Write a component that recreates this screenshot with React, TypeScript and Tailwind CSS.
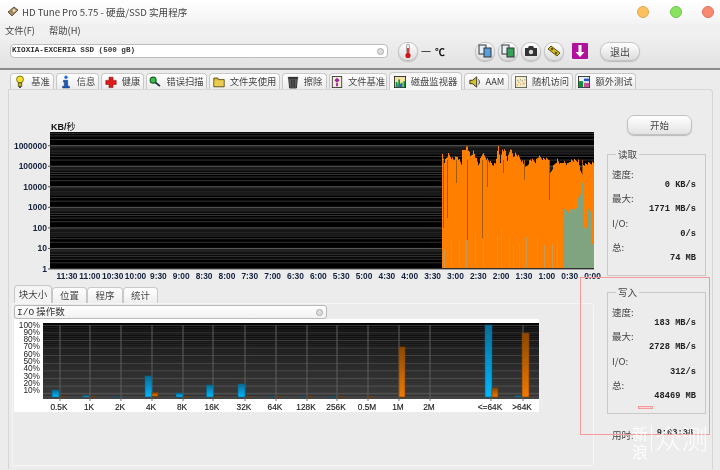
const cjk = "font-['Noto_Sans_CJK_SC','Noto_Sans',sans-serif]";
const arial = "'Liberation Sans', Arial, sans-serif";

const Bulb = () => (
  <svg width="14" height="16" viewBox="0 0 14 16">
    <circle cx="7" cy="5" r="4" fill="#f2e02a" stroke="#6d6a10" />
    <rect x="5" y="9" width="4" height="4" fill="#c9b820" stroke="#55520e" />
    <rect x="6" y="13" width="2" height="2" fill="#333" />
  </svg>
);
const Info = () => (
  <svg width="14" height="16" viewBox="0 0 14 16">
    <circle cx="7" cy="2.5" r="2" fill="#2472d8" />
    <path d="M4 6h5v7h2v2H3v-2h2V8H4z" fill="#1b5cc0" stroke="#123" strokeWidth="0.5" />
  </svg>
);
const Cross = () => (
  <svg width="15" height="16" viewBox="0 0 15 16">
    <path d="M5 2h5v4h4v5h-4v4H5v-4H1V6h4z" fill="#e01a1a" stroke="#7a0d0d" strokeWidth="0.7" />
  </svg>
);
const Lens = () => (
  <svg width="16" height="16" viewBox="0 0 16 16">
    <circle cx="5.5" cy="5.5" r="4" fill="#35c24a" stroke="#1c5a26" strokeWidth="1.4" />
    <path d="M8.5 8.5l6 5" stroke="#1d2a55" strokeWidth="2.6" />
  </svg>
);
const Folder = () => (
  <svg width="15" height="16" viewBox="0 0 15 16">
    <path d="M1 3h5l1 2h7v9H1z" fill="#d8b630" stroke="#4c3f0c" />
    <rect x="2" y="6" width="11" height="7" fill="#e9cd52" />
  </svg>
);
const Trash = () => (
  <svg width="14" height="16" viewBox="0 0 14 16">
    <rect x="1" y="2" width="12" height="2" fill="#333" />
    <path d="M2 4h10l-1 11H3z" fill="#6a6a6a" stroke="#222" />
    <path d="M5 5v9M7 5v9M9 5v9" stroke="#222" />
  </svg>
);
const DocQ = () => (
  <svg width="14" height="16" viewBox="0 0 14 16">
    <rect x="1.5" y="1.5" width="11" height="13" fill="#f1ecd8" stroke="#333" />
    <path d="M7 3l3 3-3 3-3-3z" fill="#a5209a" />
    <rect x="6" y="9" width="2" height="4" fill="#a5209a" />
  </svg>
);
const Monitor = () => (
  <svg width="14" height="14" viewBox="0 0 14 14">
    <rect x="0.5" y="0.5" width="13" height="13" fill="#f0e6a0" stroke="#222" />
    <path d="M2 13V7h2v6zM5 13V4h2v9zM8 13V8h2v5zM11 13V6h2v7z" fill="#0f8f3c" />
    <path d="M4 13v-3h1v3zM7 13v-4h1v4z" fill="#1a46c8" />
  </svg>
);
const Speaker = () => (
  <svg width="14" height="16" viewBox="0 0 14 16">
    <path d="M1 6h3l5-4v12l-5-4H1z" fill="#d5c22a" stroke="#222" />
    <path d="M11 5c1.5 2 1.5 4 0 6" stroke="#222" fill="none" />
  </svg>
);
const Random = () => (
  <svg width="14" height="14" viewBox="0 0 14 14">
    <rect x="0.5" y="0.5" width="13" height="13" fill="#f5edc0" stroke="#555" />
    <path d="M2 10h1v1H2zM4 7h1v1H4zM6 9h1v1H6zM8 5h1v1H8zM10 8h1v1h-1z" fill="#d8502a" />
    <path d="M3 5h1v1H3zM6 4h1v1H6zM9 9h1v1H9zM11 4h1v1h-1z" fill="#3a66c8" />
  </svg>
);
const Extra = () => (
  <svg width="14" height="14" viewBox="0 0 14 14">
    <rect x="0.5" y="0.5" width="13" height="13" fill="#e9f0f5" stroke="#222" />
    <path d="M1 6h5v7H1z" fill="#0f8f3c" />
    <path d="M7 3h6v3H7z" fill="#2a55c0" />
    <path d="M7 8h6v5H7z" fill="#c8509a" />
  </svg>
);

const tabs = [
  { label: "基准", width: "w-[44px]", icon: <Bulb /> },
  { label: "信息", width: "w-[43px]", icon: <Info /> },
  { label: "健康", width: "w-[43px]", icon: <Cross /> },
  { label: "错误扫描", width: "w-[61px]", icon: <Lens /> },
  { label: "文件夹使用", width: "w-[71px]", icon: <Folder /> },
  { label: "擦除", width: "w-[45px]", icon: <Trash /> },
  { label: "文件基准", width: "w-[58px]", icon: <DocQ /> },
  { label: "磁盘监视器", width: "w-[73px]", icon: <Monitor />, active: true },
  { label: "AAM", width: "w-[45px]", icon: <Speaker /> },
  { label: "随机访问", width: "w-[62px]", icon: <Random /> },
  { label: "额外测试", width: "w-[61px]", icon: <Extra /> },
];

function ToolButton({ children, className = "w-5" }: { children: React.ReactNode; className?: string }) {
  return (
    <div className={`${className} flex h-[19px] items-center justify-center rounded-[9px] border border-[#c4c4c4] bg-gradient-to-b from-white to-[#dcdcdc] shadow-[0_1px_1px_#bbb]`}>
      {children}
    </div>
  );
}

function Stats({ title, rows, className }: { title: string; rows: [string, string][]; className: string }) {
  return (
    <fieldset className={`${className} w-[99px] border border-[#c9c9c9] px-[4px]`}>
      <legend className={`${cjk} ml-[4px] px-[2px] text-[9.5px] leading-[12px] text-[#444]`}>{title}</legend>
      <div className="flex flex-col pt-[8px]">
        {rows.map(([label, value]) => (
          <div key={label} className="h-[24.4px]">
            <div className={`${cjk} h-[12px] text-[9.5px] leading-[12px] text-[#444]`}>{label}</div>
            <div className="pr-[5px] text-right font-['Liberation_Mono',monospace] text-[8.7px] leading-[10px] font-bold text-[#222]">
              {value}
            </div>
          </div>
        ))}
      </div>
    </fieldset>
  );
}

// outline of the orange area, in chart pixels
const orangeTop = [
  [442, 153], [444, 160], [448, 153], [453, 158], [457, 155], [461, 162], [462, 150], [467, 145], [470, 155],
  [473, 150], [478, 163], [482, 152], [487, 158], [492, 163], [495, 162], [498, 145], [500, 160], [502, 148],
  [505, 150], [507, 158], [510, 147], [513, 155], [515, 152], [518, 155], [522, 160], [525, 167], [530, 158],
  [535, 160], [538, 155], [542, 157], [548, 158], [550, 172], [553, 165], [557, 158], [560, 163], [563, 160],
  [567, 163], [570, 159], [578, 159], [581, 173], [583, 163], [588, 162], [594, 161],
];
const greenTop = [
  [563, 213], [565, 202], [568, 210], [571, 198], [573, 213], [577, 200], [579, 193], [582, 180], [585, 240],
  [587, 210], [590, 207], [592, 243], [593, 268],
];
const darkSpikes = [
  [443, 228], [447, 218], [456, 183], [467, 240], [482, 238], [487, 187], [503, 173], [524, 180], [549, 200], [582, 175],
];
const paleSpikes = [
  [444, 250], [451, 240], [459, 240], [466, 240], [475, 232], [483, 240], [497, 235], [501, 228], [509, 237],
  [513, 245], [519, 243], [526, 237], [537, 237], [544, 245], [552, 245], [557, 240],
];

// turns a hand-traced outline into 1px steps with a little noise, the graph is spiky
function jagged(points: number[][], amount: number) {
  const out: string[] = [];
  for (let i = 0; i < points.length - 1; i++) {
    const [x0, y0] = points[i];
    const [x1, y1] = points[i + 1];
    for (let x = x0; x < x1; x++) {
      const y = y0 + ((y1 - y0) * (x - x0)) / (x1 - x0) + ((x * 37) % 7) * amount;
      out.push(`${x},${y}`, `${x + 1},${y}`);
    }
  }
  return out.join(" ");
}

const timeLabels = [
  "11:30", "11:00", "10:30", "10:00", "9:30", "9:00", "8:30", "8:00", "7:30", "7:00", "6:30", "6:00",
  "5:30", "5:00", "4:30", "4:00", "3:30", "3:00", "2:30", "2:00", "1:30", "1:00", "0:30", "0:00",
];
const decades = ["1", "10", "100", "1000", "10000", "100000", "1000000"];

function MainChart() {
  const grid: { y: number; major: boolean; k: number }[] = [];
  for (let d = 0; d < 7; d++) {
    for (let k = 1; k < 10; k++) {
      const y = 269 - (d + Math.log10(k)) * 20.55;
      if (y > 132) grid.push({ y, major: k === 1, k });
    }
  }
  return (
    <svg width="604" height="168" viewBox="0 120 604 168" className="block">
      <text x="51" y="130" fontSize="9" fontWeight="bold" fill="#111" fontFamily={arial}>
        KB/
        <tspan fontFamily="'Noto Sans CJK SC'" fontWeight="normal">秒</tspan>
      </text>
      <rect x="50" y="132" width="544" height="137" fill="#000" />
      {grid.map((g, i) => (
        <rect key={i} x="50" y={g.y - 0.5} width="544" height="1" fill={g.major ? "#5c5c5c" : g.k > 5 ? "#262626" : "#343434"} />
      ))}
      <polygon points={`442,268 ${jagged(orangeTop, 0.5)} 594,268`} fill="#ff8000" />
      {darkSpikes.map(([x, y]) => (
        <rect key={x} x={x} y="160" width="1" height={y - 160} fill="#a55a08" />
      ))}
      {paleSpikes.map(([x, y]) => (
        <rect key={x} x={x} y={y} width="1" height={268 - y} fill="#c79a55" />
      ))}
      <polygon points={`563,268 ${jagged(greenTop, 1.2)} 593,268`} fill="#7fa47f" />
      {decades.map((d, i) => (
        <g key={d}>
          <rect x="48" y={268.5 - i * 20.55} width="2" height="1" fill="#555" />
          <text x="47" y={272 - i * 20.55} textAnchor="end" fontSize="8.5" fontWeight="bold" fill="#14213d" fontFamily={arial}>
            {d}
          </text>
        </g>
      ))}
      {timeLabels.map((t, i) => (
        <text key={t} x={67 + i * 22.85} y="279" textAnchor="middle" fontSize="8.4" fontWeight="bold" fill="#14213d" fontFamily={arial}>
          {t}
        </text>
      ))}
    </svg>
  );
}

const blockGrid = [
  ["0.5K", 60], ["1K", 90], ["2K", 121], ["4K", 152], ["8K", 183], ["16K", 213], ["32K", 245], ["64K", 276],
  ["128K", 307], ["256K", 337], ["0.5M", 368], ["1M", 399], ["2M", 430], ["<=64K", 491], [">64K", 523],
] as const;

const bars = [
  { x: 52, top: 390, w: 7, c: "b" }, { x: 83, top: 395.5, w: 6, c: "b" }, { x: 145, top: 376, w: 7, c: "b" },
  { x: 152, top: 392.5, w: 6, c: "o" }, { x: 176, top: 393, w: 7, c: "b" }, { x: 206.5, top: 385, w: 7, c: "b" },
  { x: 238, top: 384, w: 7, c: "b" }, { x: 399, top: 347, w: 6, c: "o" }, { x: 485, top: 325, w: 7, c: "b" },
  { x: 492, top: 388, w: 6, c: "o" }, { x: 515, top: 396, w: 7, c: "b" }, { x: 522, top: 333, w: 7, c: "o" },
];

function BlockChart() {
  const pct = [100, 90, 80, 70, 60, 50, 40, 30, 20, 10];
  const bands = Array.from({ length: 38 }, (_, i) => i);
  return (
    <svg width="525" height="93" viewBox="14 319 525 93" className="block">
      <defs>
        <linearGradient id="bg" x1="0" y1="0" x2="0" y2="1">
          <stop offset="0" stopColor="#050505" />
          <stop offset="1" stopColor="#444444" />
        </linearGradient>
        <linearGradient id="blue" x1="0" y1="0" x2="0" y2="1">
          <stop offset="0" stopColor="#0b6c94" />
          <stop offset="1" stopColor="#00b8ff" />
        </linearGradient>
        <linearGradient id="orange" x1="0" y1="0" x2="0" y2="1">
          <stop offset="0" stopColor="#8a4800" />
          <stop offset="1" stopColor="#f27a00" />
        </linearGradient>
      </defs>
      <rect x="14" y="319" width="525" height="93" fill="#fff" />
      <rect x="43" y="323" width="496" height="76" fill="url(#bg)" />
      {bands.map((i) => (
        <rect key={i} x="43" y={325 + i * 1.9} width="496" height="0.6" fill={i % 4 === 0 ? "#5a5a5a" : "#2e2e2e"} />
      ))}
      {blockGrid.map(([label, x]) => (
        <g key={label}>
          <rect x={x - 0.5} y="325" width="1" height="74" fill="#5e5e5e" />
          <rect x={x - 0.5} y="399" width="1" height="2" fill="#777" />
          <text x={x - 1} y="409.500" textAnchor="middle" fontSize="8.3" fill="#222" stroke="#222" strokeWidth="0.15" fontFamily={arial}>
            {label}
          </text>
        </g>
      ))}
      {pct.map((p, i) => (
        <text key={p} x="40" y={327.5 + i * 7.3} textAnchor="end" fontSize="8.3" fill="#222" fontFamily={arial}>
          {p}%
        </text>
      ))}
      {bars.map((b) => (
        <rect
          key={b.x}
          x={b.x}
          y={b.top}
          width={b.w}
          height={397 - b.top}
          fill={b.c === "b" ? "url(#blue)" : "url(#orange)"}
          stroke={b.c === "b" ? "#0a5f80" : "#7a4000"}
          strokeWidth="0.6"
        />
      ))}
      {[60, 90, 152, 183, 213, 245, 276, 307, 337, 368].map((x) => (
        <rect key={x} x={x} y="396" width="6" height="1.4" fill="#6b3d10" />
      ))}
      {[114, 269, 300, 330].map((x) => (
        <rect key={x} x={x} y="396" width="6" height="1.4" fill="#14506a" />
      ))}
    </svg>
  );
}

export default function App() {
  const subTabs = [
    { label: "块大小", w: "w-[38px]", active: true },
    { label: "位置", w: "w-[35px]" },
    { label: "程序", w: "w-[36px]" },
    { label: "统计", w: "w-[35px]" },
  ];
  return (
    <div className={`${cjk} relative flex h-[470px] w-[720px] flex-col overflow-hidden bg-[#ececec] text-[#333] blur-[0.3px]`}>
      {/* title bar */}
      <div className="flex h-6 shrink-0 items-center bg-gradient-to-b from-white to-[#f3f3f3] pr-[6px] pl-[7px]">
        <svg width="12" height="12" viewBox="0 0 12 12">
          <path d="M1 6l6-5 4 3-6 6z" fill="#a88a60" stroke="#4a3b28" strokeWidth="0.8" />
          <circle cx="7" cy="4.5" r="1.4" fill="#e8dcc0" />
        </svg>
        <span className="ml-[3px] text-[9.6px] text-[#444]">HD Tune Pro 5.75 - 硬盘/SSD 实用程序</span>
        <div className="ml-auto flex items-center">
          <span className="h-3 w-3 rounded-full border border-[#e0a850] bg-[#fcc05e]" />
          <span className="ml-[21px] h-3 w-3 rounded-full border border-[#6cc850] bg-[#8ae35f]" />
          <span className="ml-[20px] h-3 w-3 rounded-full border border-[#e07060] bg-[#f88a70]" />
        </div>
      </div>

      {/* menu */}
      <div className="flex h-[14px] shrink-0 items-center gap-[14px] bg-[#f0f0f0] pl-[5px] text-[9.3px] text-[#444]">
        <span>文件(F)</span>
        <span>帮助(H)</span>
      </div>

      {/* toolbar */}
      <div className="flex h-[32px] shrink-0 items-center border-b-2 border-[#8c8c8c] bg-gradient-to-b from-[#efefef] to-[#e2e2e2] pb-[4px] pl-[10px]">
        <div className="flex h-[14px] w-[378px] items-center justify-between rounded-[4px] border border-[#bcbcbc] bg-white pr-[3px] pl-[1px] font-['Liberation_Mono',monospace] text-[7.6px] font-bold text-[#333]">
          <span>KIOXIA-EXCERIA SSD (500 gB)</span>
          <span className="h-[7px] w-[7px] rounded-full border border-[#aaa] bg-[#ddd]" />
        </div>
        <ToolButton className="ml-[10px] w-5">
          <svg width="8" height="16" viewBox="0 0 8 16">
            <rect x="2.5" y="1" width="3" height="10" rx="1.5" fill="#eee" stroke="#777" strokeWidth="0.6" />
            <rect x="3.2" y="5" width="1.6" height="7" fill="#d01515" />
            <circle cx="4" cy="12.5" r="2.6" fill="#d01515" />
          </svg>
        </ToolButton>
        <span className="ml-[3px] text-[10px] text-[#222]">一</span>
        <span className="ml-[4px] text-[10px] font-bold text-[#111]">℃</span>
        <div className="ml-[30px] flex gap-[3px]">
          <ToolButton>
            <svg width="14" height="14" viewBox="0 0 14 14">
              <rect x="1" y="1" width="7" height="9" fill="#e6f0f8" stroke="#333" />
              <rect x="6" y="4" width="7" height="9" fill="#58a0dc" stroke="#333" />
            </svg>
          </ToolButton>
          <ToolButton>
            <svg width="14" height="14" viewBox="0 0 14 14">
              <rect x="1" y="1" width="7" height="9" fill="#e6f0f8" stroke="#333" />
              <rect x="6" y="4" width="7" height="9" fill="#38a058" stroke="#333" />
            </svg>
          </ToolButton>
          <ToolButton>
            <svg width="14" height="12" viewBox="0 0 14 12">
              <path d="M1 3h3l1-2h4l1 2h3v8H1z" fill="#333" />
              <circle cx="7" cy="7" r="2.2" fill="#ddd" />
            </svg>
          </ToolButton>
          <ToolButton>
            <svg width="14" height="14" viewBox="0 0 14 14">
              <path d="M1 5l3-3 9 7-3 3z" fill="#d4b820" stroke="#5a4f10" />
              <circle cx="5" cy="5" r="1.2" fill="#5a4f10" />
              <circle cx="9" cy="9" r="1.2" fill="#5a4f10" />
            </svg>
          </ToolButton>
        </div>
        <div className="ml-[6px] flex h-5 w-5 items-center justify-center bg-[#e9e9e9]">
          <svg width="16" height="16" viewBox="0 0 16 16">
            <rect width="16" height="16" rx="1" fill="#b0109c" />
            <path d="M6.5 2h3v7h3L8 14 3.500 9h3z" fill="#fff" />
          </svg>
        </div>
        <ToolButton className="ml-[10px] w-[40px]">
          <span className="text-[10px] text-[#444]">退出</span>
        </ToolButton>
      </div>

      {/* tabs */}
      <div className="flex h-[19px] shrink-0 items-end gap-[2px] pl-[10px]">
        {tabs.map((t) => (
          <div
            key={t.label}
            className={`${t.width} flex items-center justify-center gap-[5px] rounded-t-[4px] border border-b-0 border-[#c8c8c8] text-[9.3px] text-[#444] ${
              t.active ? "relative z-10 -mb-px h-[18px] bg-[#f8f8f8]" : "h-[16px] bg-gradient-to-b from-white to-[#ececec]"
            }`}
          >
            <span className="flex h-3 w-3 shrink-0 items-center justify-center [&>svg]:h-[14px] [&>svg]:w-[14px]">{t.icon}</span>
            <span className="whitespace-nowrap">{t.label}</span>
          </div>
        ))}
      </div>

      {/* monitor panel */}
      <div className="ml-[8px] flex h-[380px] w-[705px] shrink-0 rounded-tr-[4px] border border-b-0 border-[#d6d6d6]">
        <div className="flex w-[590px] shrink-0 flex-col">
          <div className="mt-[30px] -ml-[9px]">
            <MainChart />
          </div>
          <div className="-mt-[3px] ml-[5px] flex h-[18px] items-end">
            {subTabs.map((t) => (
              <div
                key={t.label}
                className={`${t.w} flex items-center justify-center rounded-t-[4px] border border-b-0 border-[#c8c8c8] text-[9.5px] text-[#444] ${
                  t.active ? "h-[18px] bg-[#f4f4f4]" : "h-[16px] bg-gradient-to-b from-white to-[#eeeeee]"
                }`}
              >
                {t.label}
              </div>
            ))}
          </div>
          <div className="ml-[3px] h-[163px] w-[582px] rounded-[2px] border border-[#f5f5f5] bg-[#ebebeb] px-[1px] pt-[1px]">
            <div className="flex h-[14px] w-[313px] items-center justify-between rounded-[3px] border border-[#b8b8b8] bg-gradient-to-b from-white to-[#f1f1f1] pr-[3px] pl-[2px] text-[9.5px] text-[#333]">
              <span>
                <span className="font-['Liberation_Mono',monospace]">I/O</span> 操作数
              </span>
              <span className="h-[7px] w-[7px] rounded-full border border-[#aaa] bg-[#ddd]" />
            </div>
            <BlockChart />
          </div>
        </div>

        <div className="flex flex-1 flex-col pl-[8px]">
          <div className="mt-[25px] ml-[20px] flex h-[20px] w-[65px] items-center justify-center rounded-[7px] border border-[#c2c2c2] bg-gradient-to-b from-white to-[#e3e3e3] text-[9.5px] text-[#444] shadow-[0_1px_1px_#bbb]">
            开始
          </div>
          <Stats
            title="读取"
            className="mt-[13px] h-[128px]"
            rows={[
              ["速度:", "0 KB/s"],
              ["最大:", "1771 MB/s"],
              ["I/O:", "0/s"],
              ["总:", "74 MB"],
            ]}
          />
          <Stats
            title="写入"
            className="mt-[10px] h-[128px]"
            rows={[
              ["速度:", "183 MB/s"],
              ["最大:", "2728 MB/s"],
              ["I/O:", "312/s"],
              ["总:", "48469 MB"],
            ]}
          />
          <div className="mt-[14px] flex items-center pl-[5px]">
            <span className="text-[9.5px] text-[#444]">用时:</span>
            <span className="-mt-[4px] ml-[23px] font-['Liberation_Mono',monospace] text-[8.7px] font-bold text-[#333]">9:03:38</span>
          </div>
        </div>
      </div>

      {/* red annotation drawn over the screenshot */}
      <div className="absolute top-[277px] left-[580px] h-[158px] w-[130px] border border-[#f49a9a]" />
      <div className="absolute top-[406px] left-[638px] h-[3px] w-[15px] border border-[#f49a9a] bg-[#f6d8d8]" />

      {/* watermark */}
      <div className="absolute top-[424px] left-[632px] flex items-start text-white opacity-90">
        <div className="w-[17px] text-[16px] leading-[18px]">
          新
          <br />浪
        </div>
        <div className="mt-[1px] ml-[2px] h-[26px] w-px bg-white" />
        <div className="ml-[3px] text-[26.5px] leading-[28px] font-light whitespace-nowrap">众测</div>
      </div>
    </div>
  );
}
